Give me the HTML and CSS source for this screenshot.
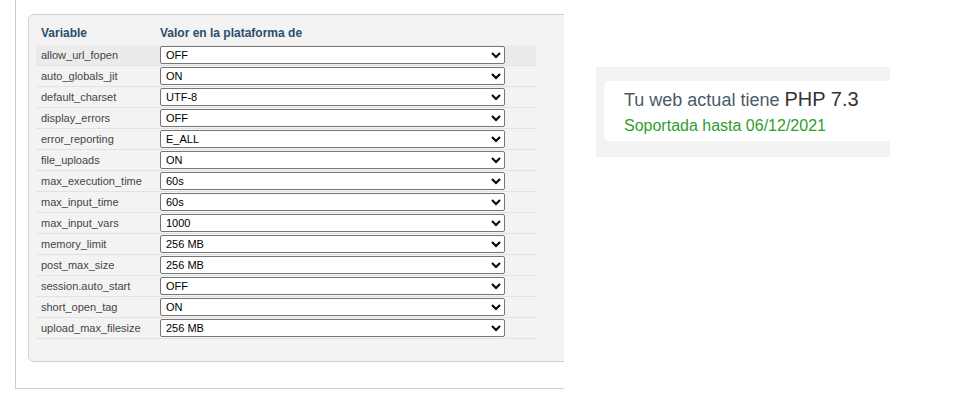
FILE: index.html
```html
<!DOCTYPE html>
<html lang="es">
<head>
<meta charset="utf-8">
<title>PHP</title>
<link rel="stylesheet" href="styles.css">
</head>
<body>
<div class="page">
  <div class="left">
    <div class="panel">
      <table class="vars">
        <thead>
          <tr><th class="c1">Variable</th><th class="c2">Valor en la plataforma de</th></tr>
        </thead>
        <tbody>
          <tr class="hl"><td class="c1">allow_url_fopen</td><td><select><option>OFF</option></select></td></tr>
          <tr><td class="c1">auto_globals_jit</td><td><select><option>ON</option></select></td></tr>
          <tr><td class="c1">default_charset</td><td><select><option>UTF-8</option></select></td></tr>
          <tr><td class="c1">display_errors</td><td><select><option>OFF</option></select></td></tr>
          <tr><td class="c1">error_reporting</td><td><select><option>E_ALL</option></select></td></tr>
          <tr><td class="c1">file_uploads</td><td><select><option>ON</option></select></td></tr>
          <tr><td class="c1">max_execution_time</td><td><select><option>60s</option></select></td></tr>
          <tr><td class="c1">max_input_time</td><td><select><option>60s</option></select></td></tr>
          <tr><td class="c1">max_input_vars</td><td><select><option>1000</option></select></td></tr>
          <tr><td class="c1">memory_limit</td><td><select><option>256 MB</option></select></td></tr>
          <tr><td class="c1">post_max_size</td><td><select><option>256 MB</option></select></td></tr>
          <tr><td class="c1">session.auto_start</td><td><select><option>OFF</option></select></td></tr>
          <tr><td class="c1">short_open_tag</td><td><select><option>ON</option></select></td></tr>
          <tr><td class="c1">upload_max_filesize</td><td><select><option>256 MB</option></select></td></tr>
        </tbody>
      </table>
    </div>
  </div>
  <div class="right">
    <div class="info">
      <div class="card">
        <div class="line1">Tu web actual tiene <span class="ver">PHP 7.3</span></div>
        <div class="line2">Soportada hasta 06/12/2021</div>
      </div>
    </div>
  </div>
</div>
</body>
</html>
```
FILE: styles.css
```css
html, body {
  margin: 0;
  padding: 0;
  background: #fff;
  font-family: "Liberation Sans", Arial, sans-serif;
}
.page {
  display: flex;
  align-items: flex-start;
}
.left {
  margin-left: 15px;
  width: 536px;
  height: 374px;
  padding: 14px 0 0 12px;
  box-sizing: content-box;
  border-left: 1px solid #cccccc;
  border-bottom: 1px solid #cccccc;
  overflow: hidden;
}
.panel {
  width: 600px;
  background: #f3f3f3;
  border: 1px solid #d2d2d2;
  border-radius: 6px;
  padding: 6px 7px 22px 7px;
  box-sizing: border-box;
}
.vars {
  width: 500px;
  border-collapse: collapse;
  font-size: 11px;
}
.vars th {
  text-align: left;
  font-weight: bold;
  font-size: 12px;
  color: #2b4e6c;
  height: 24px;
  padding: 0 5px;
  vertical-align: middle;
}
.vars td {
  height: 20px;
  padding: 0 5px;
  border-bottom: 1px solid #e2e2e2;
  color: #454545;
  vertical-align: middle;
}
.vars .c1 {
  width: 109px;
}
.vars tr.hl td {
  background: #ebebeb;
}
.vars select {
  width: 345px;
  height: 18px;
  font-family: "Liberation Sans", Arial, sans-serif;
  font-size: 11px;
  color: #000;
  background: #fff;
  border: 1px solid #767676;
  border-radius: 2px;
  padding: 0 0 0 1px;
  margin: 0;
  display: block;
}
.right {
  margin-left: 32px;
  margin-top: 67px;
}
.info {
  width: 294px;
  height: 90px;
  background: #f3f3f3;
  padding: 14px 0 0 8px;
  box-sizing: border-box;
}
.card {
  background: #fff;
  height: 60px;
  border-radius: 5px 0 0 5px;
  padding: 6px 0 0 20px;
  box-sizing: border-box;
}
.line1 {
  font-size: 18px;
  line-height: 24px;
  color: #4a5b6b;
}
.line1 .ver {
  font-size: 20px;
  color: #333333;
}
.line2 {
  font-size: 16px;
  line-height: 22px;
  color: #2e9d2e;
  margin-top: 3px;
}
```
